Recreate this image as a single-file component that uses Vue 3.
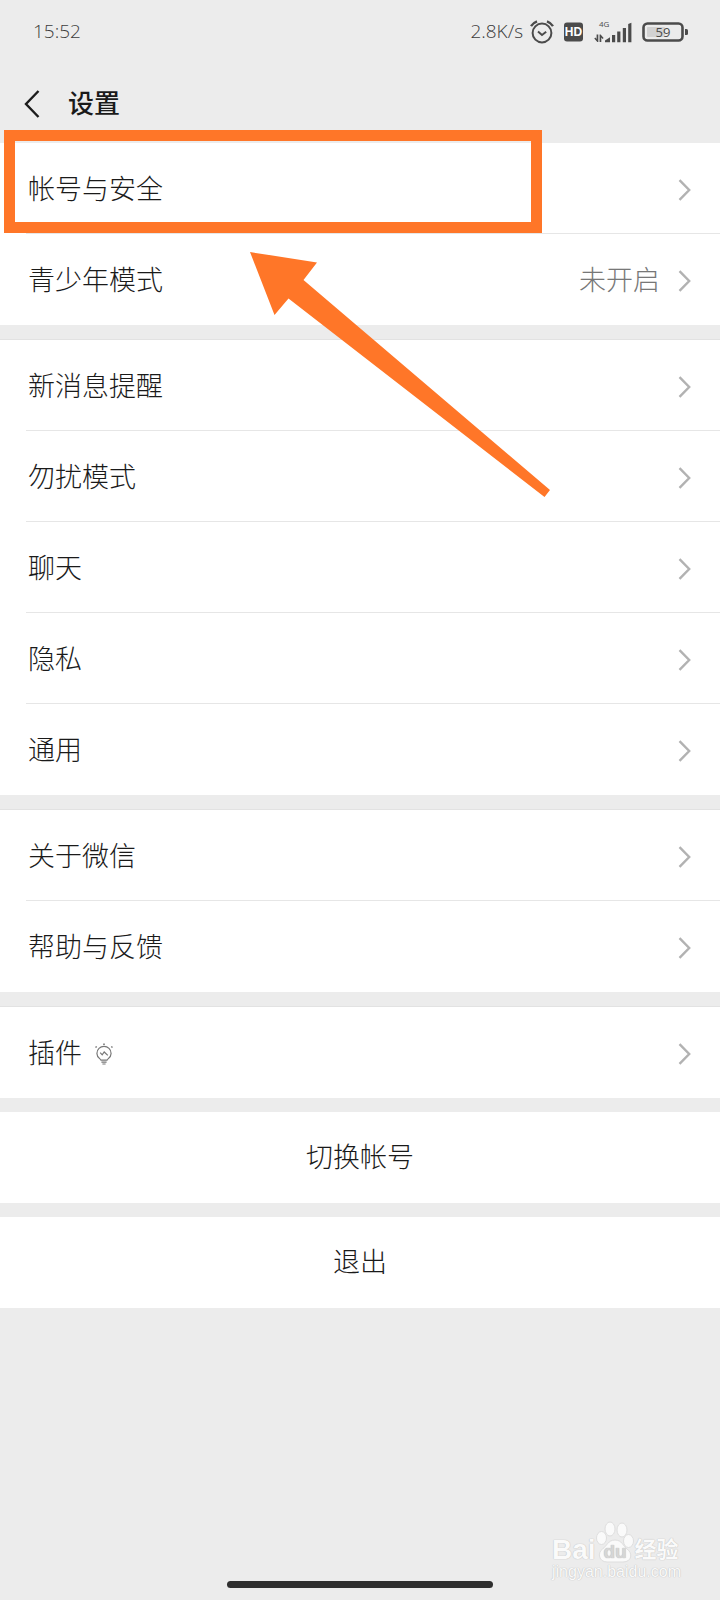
<script setup>
const groups = [
  [{ label: '帐号与安全' }, { label: '青少年模式', value: '未开启' }],
  [
    { label: '新消息提醒' },
    { label: '勿扰模式' },
    { label: '聊天' },
    { label: '隐私' },
    { label: '通用' },
  ],
  [{ label: '关于微信' }, { label: '帮助与反馈' }],
  [{ label: '插件', bulb: true }],
]
const actions = ['切换帐号', '退出']
</script>

<template>
  <div class="page">
    <div class="status">
      <span class="time">15:52</span>
      <span class="speed">2.8K/s</span>
      <svg class="alarm" width="24" height="24" viewBox="0 0 24 24" fill="none" stroke="#4b4b4b" stroke-width="2">
        <circle cx="12" cy="13" r="9.4" />
        <path d="M1 6.2 Q3 3 7 1.4 M23 6.2 Q21 3 17 1.4" stroke-width="2.4" />
        <path d="M8 11.5 L12 15 L16.2 11.8" />
      </svg>
      <svg class="hd" width="20" height="20" viewBox="0 0 20 20">
        <rect x="0" y="0.6" width="19" height="19" rx="3" fill="#4b4b4b" />
        <text x="9.5" y="14.4" text-anchor="middle" class="hd-text">HD</text>
      </svg>
      <svg class="signal" width="40" height="26" viewBox="0 0 40 26" fill="#4b4b4b">
        <text x="5" y="8" class="net-text">4G</text>
        <path d="M2.6 15.500h1.700v7.500h-1L0.300 19.600l1-1 1.300 1.300zM5.600 15.500h1l3 3.400-1 1-1.300-1.300V23H5.600z" />
        <path d="M11 23.200v-1.600l5-3.400v5z" />
        <path d="M18 16h3.200v7.200H18zM23.200 12.600h3.200v10.600h-3.200zM28.800 9h3.200v14.200h-3.200zM34.200 5l3.200-1.200v19.400h-3.200z" />
      </svg>
      <svg class="battery" width="47" height="22" viewBox="0 0 47 22">
        <rect x="1.5" y="2.5" width="39" height="17" rx="4" fill="none" stroke="#4b4b4b" stroke-width="2.6" />
        <rect x="5" y="6" width="18" height="10" rx="1" fill="#d2d2d2" />
        <path d="M43 8h1.500q1.500 0 1.500 1.500v3q0 1.500-1.500 1.500H43z" fill="#4b4b4b" />
        <text x="21" y="15.600" text-anchor="middle" class="battery-text">59</text>
      </svg>
    </div>

    <header class="header">
      <button class="back" aria-label="返回">
        <svg width="18" height="30" viewBox="0 0 18 30" fill="none" stroke="#1c1c1c" stroke-width="2.4">
          <path d="M14.500 2 L2 15 L14.500 28" />
        </svg>
      </button>
      <h1>设置</h1>
    </header>

    <main class="list">
      <section v-for="(group, i) in groups" :key="i" class="group">
        <button v-for="row in group" :key="row.label" class="row">
          <span class="content">
            <span class="label">{{ row.label }}</span>
            <svg v-if="row.bulb" class="bulb" width="18" height="22" viewBox="0 0 18 22" fill="none" stroke="#777" stroke-width="1.2">
              <path d="M6 17.2 C6 16 1.900 14.800 1.900 10.400 A7.100 7.100 0 0 1 16.100 10.400 C16.100 14.800 12 16 12 17.200 Z" />
              <path d="M5.200 9.600 L7.200 11.800 L9.200 9 L12.800 12.400 M6.400 19.200h5.200 M7.400 21h3.200" />
              <path d="M8.200 1.200h1.600 M0.600 3.400l1 1.200 M17.400 3.400l-1 1.200" stroke-width="1.6" />
            </svg>
            <span v-if="row.value" class="value">{{ row.value }}</span>
            <svg class="chevron" width="14" height="22" viewBox="0 0 14 22" fill="none" stroke="#b2b2b2" stroke-width="2.4">
              <path d="M1.500 1.200 L11.200 11 L1.500 20.800" />
            </svg>
          </span>
        </button>
      </section>
      <button v-for="action in actions" :key="action" class="action">{{ action }}</button>

      <div class="highlight"></div>
      <svg class="arrow" width="300" height="245" viewBox="0 0 300 245" fill="#ff7628">
        <path d="M0 0 L67 10.5 L53.5 28 L300 238 L294.5 245 L38.5 46.5 L24.5 63 Z" />
      </svg>
    </main>

    <footer class="footer">
      <div class="watermark">
        <div class="brand">
          <span>Bai</span>
          <svg width="38" height="42" viewBox="0 0 38 42" fill="#fafafa" stroke="#dedede">
            <ellipse cx="5.5" cy="17" rx="5" ry="6.5" />
            <ellipse cx="14" cy="8" rx="5" ry="7" />
            <ellipse cx="26" cy="9" rx="5" ry="7" />
            <ellipse cx="32.5" cy="20" rx="5" ry="6.5" />
            <path d="M19 19 C12 19 11 25 6.500 28 C1 32 3 41 11 41 H27 C36 41 37 32 31 28 C27 25 26 19 19 19 Z" />
            <text x="19" y="37" text-anchor="middle" class="du">du</text>
          </svg>
          <span class="brand-cn">经验</span>
        </div>
        <div class="site">jingyan.baidu.com</div>
      </div>
      <div class="home-bar"></div>
    </footer>
  </div>
</template>

<style>
body {
  background: #ececec;
}
</style>

<style scoped>
.page {
  min-height: 100vh;
  display: flex;
  flex-direction: column;
  background: #ececec;
  color: #1a1a1a;
  font-family: "Liberation Sans", "Noto Sans CJK SC", sans-serif;
}
button {
  margin: 0;
  padding: 0;
  border: 0;
  background: none;
  color: inherit;
  font: inherit;
}
svg {
  display: block;
  flex: none;
}
.status {
  display: flex;
  align-items: center;
  height: 64px;
  padding: 0 31px 0 33px;
  color: #3c3c3c;
  font-family: "Open Sans", sans-serif;
  font-weight: 300;
  font-size: 19px;
  line-height: 26px;
}
.time,
.speed {
  padding-bottom: 2px;
}
.time {
  margin-right: auto;
}
.speed {
  margin-right: 7px;
}
.hd {
  margin-left: 10px;
}
.signal {
  margin-left: 10px;
}
.battery {
  margin-left: 8px;
}
.hd-text {
  font: bold 12px "Liberation Sans", sans-serif;
  fill: #fff;
}
.net-text {
  font: 8px "Open Sans", sans-serif;
}
.battery-text {
  font: 13px "Open Sans", sans-serif;
  fill: #4b4b4b;
}
.header {
  display: flex;
  align-items: center;
  height: 79px;
  padding-left: 24px;
}
.back {
  margin-right: 26px;
}
h1 {
  margin: 0;
  font-size: 26px;
  font-weight: 500;
  line-height: 36px;
}
.list {
  position: relative;
  display: flex;
  flex-direction: column;
  gap: 14px;
}
.group {
  background: #fff;
}
.group + .group {
  border-top: 1px solid #e2e2e2;
}
.row {
  display: block;
  width: 100%;
  padding-left: 26px;
  text-align: left;
}
.content {
  display: flex;
  align-items: center;
  box-sizing: border-box;
  height: 91px;
  padding: 3px 28px 0 2px;
  border-bottom: 1px solid #e6e6e6;
}
.row:last-child .content {
  border-bottom-color: transparent;
}
.label,
.value,
.action {
  font-size: 27px;
  font-weight: 300;
  line-height: 36px;
}
.bulb {
  margin-left: 13px;
}
.value {
  margin-left: auto;
  color: #777;
}
.chevron {
  margin-left: auto;
}
.value + .chevron {
  margin-left: 18px;
}
.action {
  height: 91px;
  background: #fff;
  text-align: center;
}
.highlight {
  position: absolute;
  top: -13px;
  left: 4px;
  box-sizing: border-box;
  width: 538px;
  height: 103px;
  border: 11px solid #ff7628;
}
.arrow {
  position: absolute;
  top: 109px;
  left: 250px;
}
.footer {
  margin-top: auto;
  padding-bottom: 12px;
}
.watermark {
  width: 130px;
  margin: 0 38px 0 auto;
  color: #fafafa;
  text-shadow: 0 0 1px #bbb, 0 0 1px #ccc;
}
.brand {
  display: flex;
  align-items: flex-end;
  font-weight: bold;
  font-size: 28px;
  line-height: 26px;
}
.brand-cn {
  font-size: 22px;
  margin-left: 1px;
}
.du {
  font: bold 19px "Liberation Sans", sans-serif;
  fill: #d6d6d6;
  stroke: none;
}
.site {
  font-size: 16px;
  line-height: 18px;
}
.home-bar {
  width: 37%;
  height: 7px;
  margin: 0 auto;
  border-radius: 4px;
  background: #2f2f2f;
}
</style>
